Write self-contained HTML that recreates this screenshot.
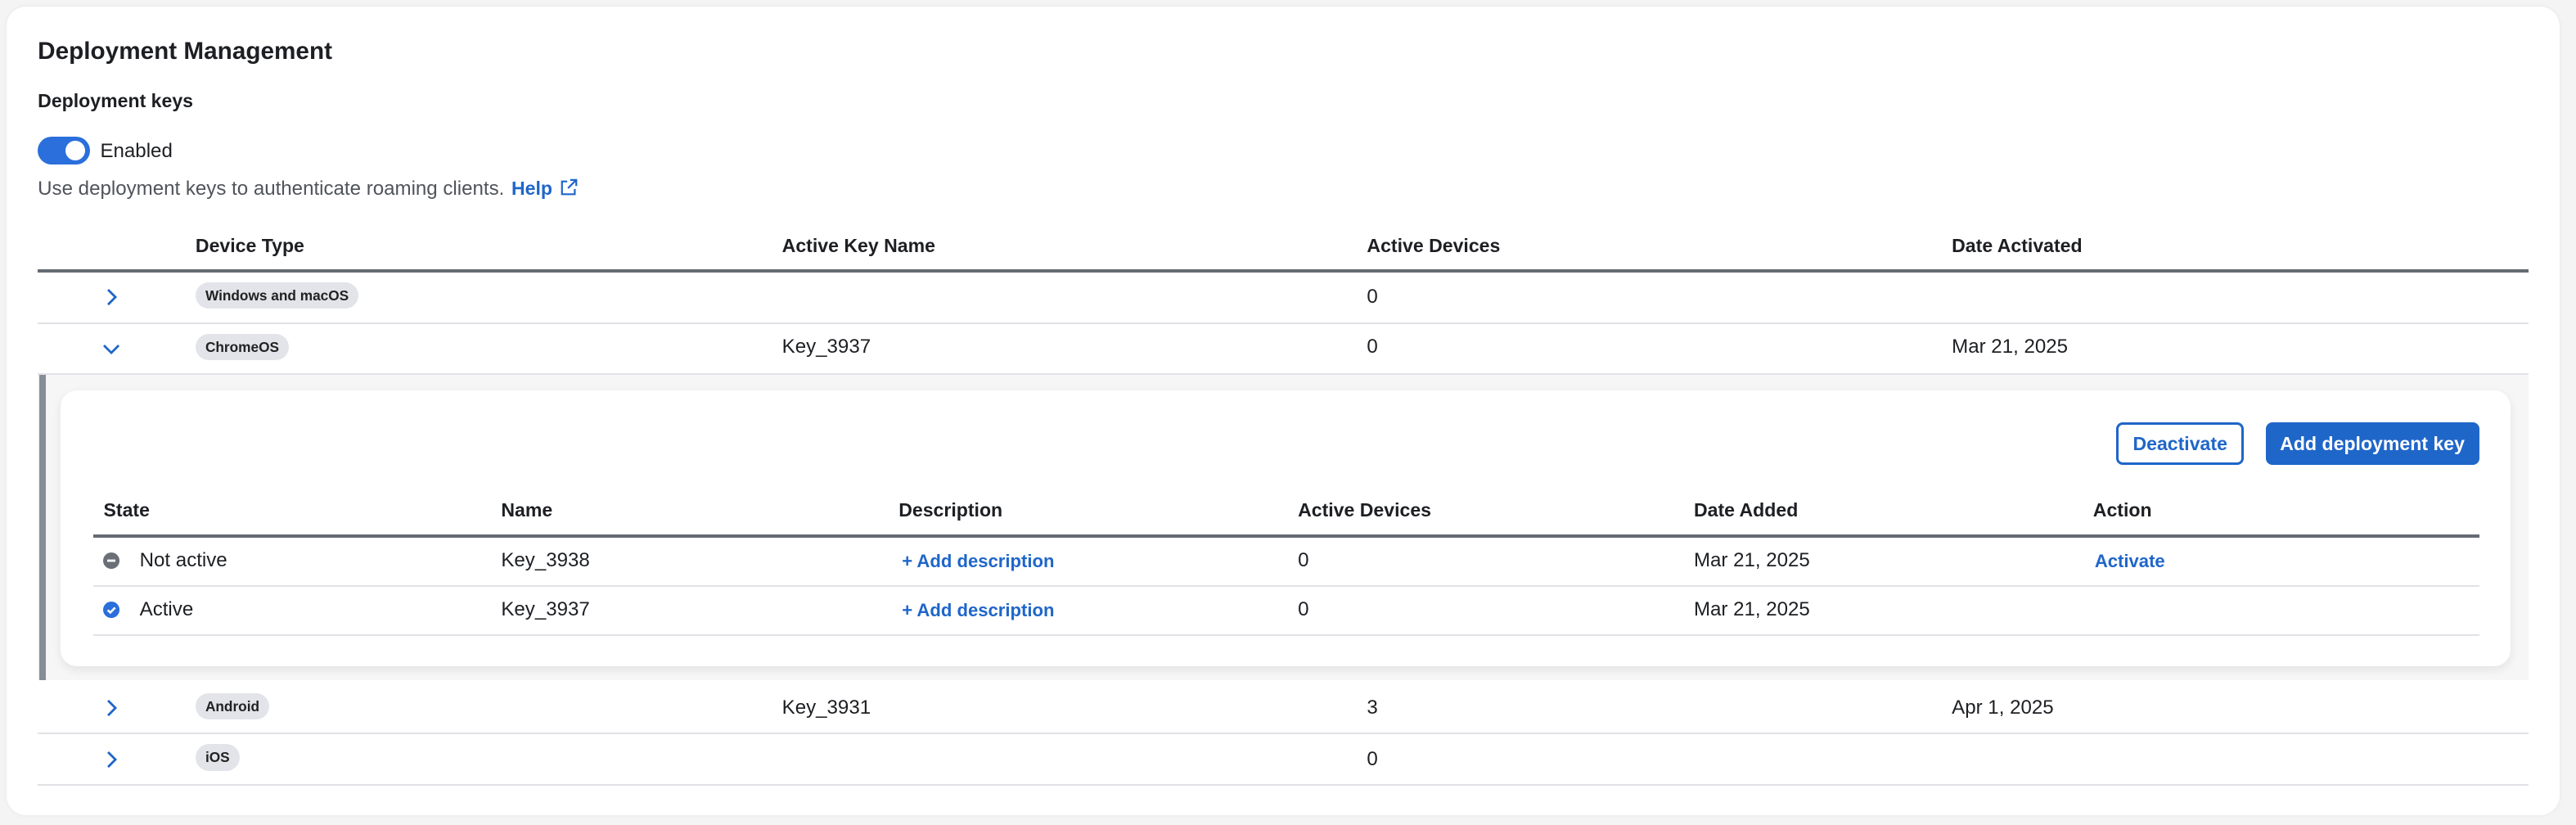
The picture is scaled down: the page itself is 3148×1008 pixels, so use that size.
<!DOCTYPE html>
<html><head><meta charset="utf-8"><style>
html,body{margin:0;padding:0}
body{width:3148px;height:1008px;overflow:hidden;background:#f4f4f5}
#w{zoom:2.0077;width:1568px;height:502px;position:relative;font-family:"Liberation Sans",Arial,sans-serif;color:#1d1f23}
.card{position:absolute;left:4px;top:4px;width:1554px;height:492px;background:#fff;border-radius:12px;box-shadow:0 0 3px rgba(0,0,0,.06)}
.a{position:absolute;white-space:nowrap}
.h1{left:23px;top:23px;font-size:14.8px;font-weight:bold}
.h2{left:23px;top:55px;font-size:11.5px;font-weight:bold}
.tog{left:23px;top:83px;width:32px;height:17px;border-radius:9px;background:#2a6fdb}
.tog::after{content:"";position:absolute;right:3px;top:2.5px;width:12px;height:12px;border-radius:50%;background:#fff}
.t13{font-size:12px}
.th{font-size:11.5px;font-weight:bold;top:143px}
.line{position:absolute;height:1px;background:#e2e2e6}
.thick{position:absolute;height:2px;background:#646b73}
.pill{position:absolute;background:#e3e4e9;border-radius:9px;height:16px;line-height:16px;padding:0 6px;font-size:8.6px;font-weight:bold;color:#222}
.chev{position:absolute;width:14px;height:14px}
.blue{color:#1f66c9;font-weight:bold}
</style></head><body><div id="w">
<div class="card"></div>
<div class="a h1">Deployment Management</div>
<div class="a h2">Deployment keys</div>
<div class="a tog"></div>
<div class="a t13" style="left:61px;top:85px">Enabled</div>
<div class="a t13" style="left:23px;top:108px;color:#50545a">Use deployment keys to authenticate roaming clients. <span class="blue" style="margin-left:1px;font-size:11.5px">Help</span>
<svg width="11" height="11" viewBox="0 0 12 12" style="vertical-align:-1px;margin-left:1px" fill="none" stroke="#1f66c9" stroke-width="1.2"><path d="M5 2H1.5v8.5H10V7"/><path d="M7 1h4v4M11 1L5.5 6.5"/></svg></div>

<div class="a th" style="left:119px">Device Type</div>
<div class="a th" style="left:476px">Active Key Name</div>
<div class="a th" style="left:832px">Active Devices</div>
<div class="a th" style="left:1188px">Date Activated</div>
<div class="thick" style="left:23px;top:164px;width:1516px"></div>

<svg class="chev" style="left:61px;top:174px" viewBox="0 0 14 14" fill="none" stroke="#1f66c9" stroke-width="1.4"><path d="M5 2.5l4.5 4.5L5 11.5"/></svg>
<div class="pill" style="left:119px;top:172px">Windows and macOS</div>
<div class="a t13" style="left:832px;top:174px">0</div>
<div class="line" style="left:23px;top:196px;width:1516px"></div>

<svg class="chev" style="left:61px;top:205px" viewBox="0 0 14 14" fill="none" stroke="#1f66c9" stroke-width="1.4"><path d="M2.5 5l4.5 4.5L11.5 5"/></svg>
<div class="pill" style="left:119px;top:203px">ChromeOS</div>
<div class="a t13" style="left:476px;top:204px">Key_3937</div>
<div class="a t13" style="left:832px;top:204px">0</div>
<div class="a t13" style="left:1188px;top:204px">Mar 21, 2025</div>
<div class="line" style="left:23px;top:227px;width:1516px"></div>

<div class="a" style="left:23px;top:228px;width:1516px;height:186px;background:#f6f6f7"></div>
<div class="a" style="left:24px;top:228px;width:4px;height:186px;background:#878d96"></div>
<div class="a" style="left:37px;top:237.5px;width:1491px;height:168px;background:#fff;border-radius:10px;box-shadow:0 2px 6px rgba(0,0,0,.08)"></div>

<div class="a" style="left:1288px;top:257px;width:75px;height:23px;border:1.5px solid #1f66c9;border-radius:4px;text-align:center;line-height:23px;font-size:11.5px" ><span class="blue">Deactivate</span></div>
<div class="a" style="left:1379px;top:257px;width:130px;height:26px;background:#1f66c9;border-radius:4px;text-align:center;line-height:26px;font-size:11.5px;color:#fff;font-weight:bold">Add deployment key</div>

<div class="a th" style="left:63px;top:304px">State</div>
<div class="a th" style="left:305px;top:304px">Name</div>
<div class="a th" style="left:547px;top:304px">Description</div>
<div class="a th" style="left:790px;top:304px">Active Devices</div>
<div class="a th" style="left:1031px;top:304px">Date Added</div>
<div class="a th" style="left:1274px;top:304px">Action</div>
<div class="thick" style="left:57px;top:325px;width:1452px"></div>

<svg class="a" style="left:63px;top:336px" width="10" height="10" viewBox="0 0 10 10"><circle cx="5" cy="5" r="5" fill="#6b7078"/><rect x="2.5" y="4.3" width="5" height="1.4" fill="#fff"/></svg>
<div class="a t13" style="left:85px;top:334px">Not active</div>
<div class="a t13" style="left:305px;top:334px">Key_3938</div>
<div class="a blue" style="left:549px;top:335px;font-size:11px">+ Add description</div>
<div class="a t13" style="left:790px;top:334px">0</div>
<div class="a t13" style="left:1031px;top:334px">Mar 21, 2025</div>
<div class="a blue" style="left:1275px;top:335px;font-size:11px">Activate</div>
<div class="line" style="left:57px;top:356px;width:1452px"></div>

<svg class="a" style="left:63px;top:366px" width="10" height="10" viewBox="0 0 10 10"><circle cx="5" cy="5" r="5" fill="#2a6fdb"/><path d="M2.8 5.2l1.6 1.5 2.9-3" fill="none" stroke="#fff" stroke-width="1.3"/></svg>
<div class="a t13" style="left:85px;top:364px">Active</div>
<div class="a t13" style="left:305px;top:364px">Key_3937</div>
<div class="a blue" style="left:549px;top:365px;font-size:11px">+ Add description</div>
<div class="a t13" style="left:790px;top:364px">0</div>
<div class="a t13" style="left:1031px;top:364px">Mar 21, 2025</div>
<div class="line" style="left:57px;top:386px;width:1452px"></div>

<svg class="chev" style="left:61px;top:424px" viewBox="0 0 14 14" fill="none" stroke="#1f66c9" stroke-width="1.4"><path d="M5 2.5l4.5 4.5L5 11.5"/></svg>
<div class="pill" style="left:119px;top:422px">Android</div>
<div class="a t13" style="left:476px;top:424px">Key_3931</div>
<div class="a t13" style="left:832px;top:424px">3</div>
<div class="a t13" style="left:1188px;top:424px">Apr 1, 2025</div>
<div class="line" style="left:23px;top:446px;width:1516px"></div>

<svg class="chev" style="left:61px;top:455px" viewBox="0 0 14 14" fill="none" stroke="#1f66c9" stroke-width="1.4"><path d="M5 2.5l4.5 4.5L5 11.5"/></svg>
<div class="pill" style="left:119px;top:453px">iOS</div>
<div class="a t13" style="left:832px;top:455px">0</div>
<div class="line" style="left:23px;top:477px;width:1516px"></div>
</div></body></html>
